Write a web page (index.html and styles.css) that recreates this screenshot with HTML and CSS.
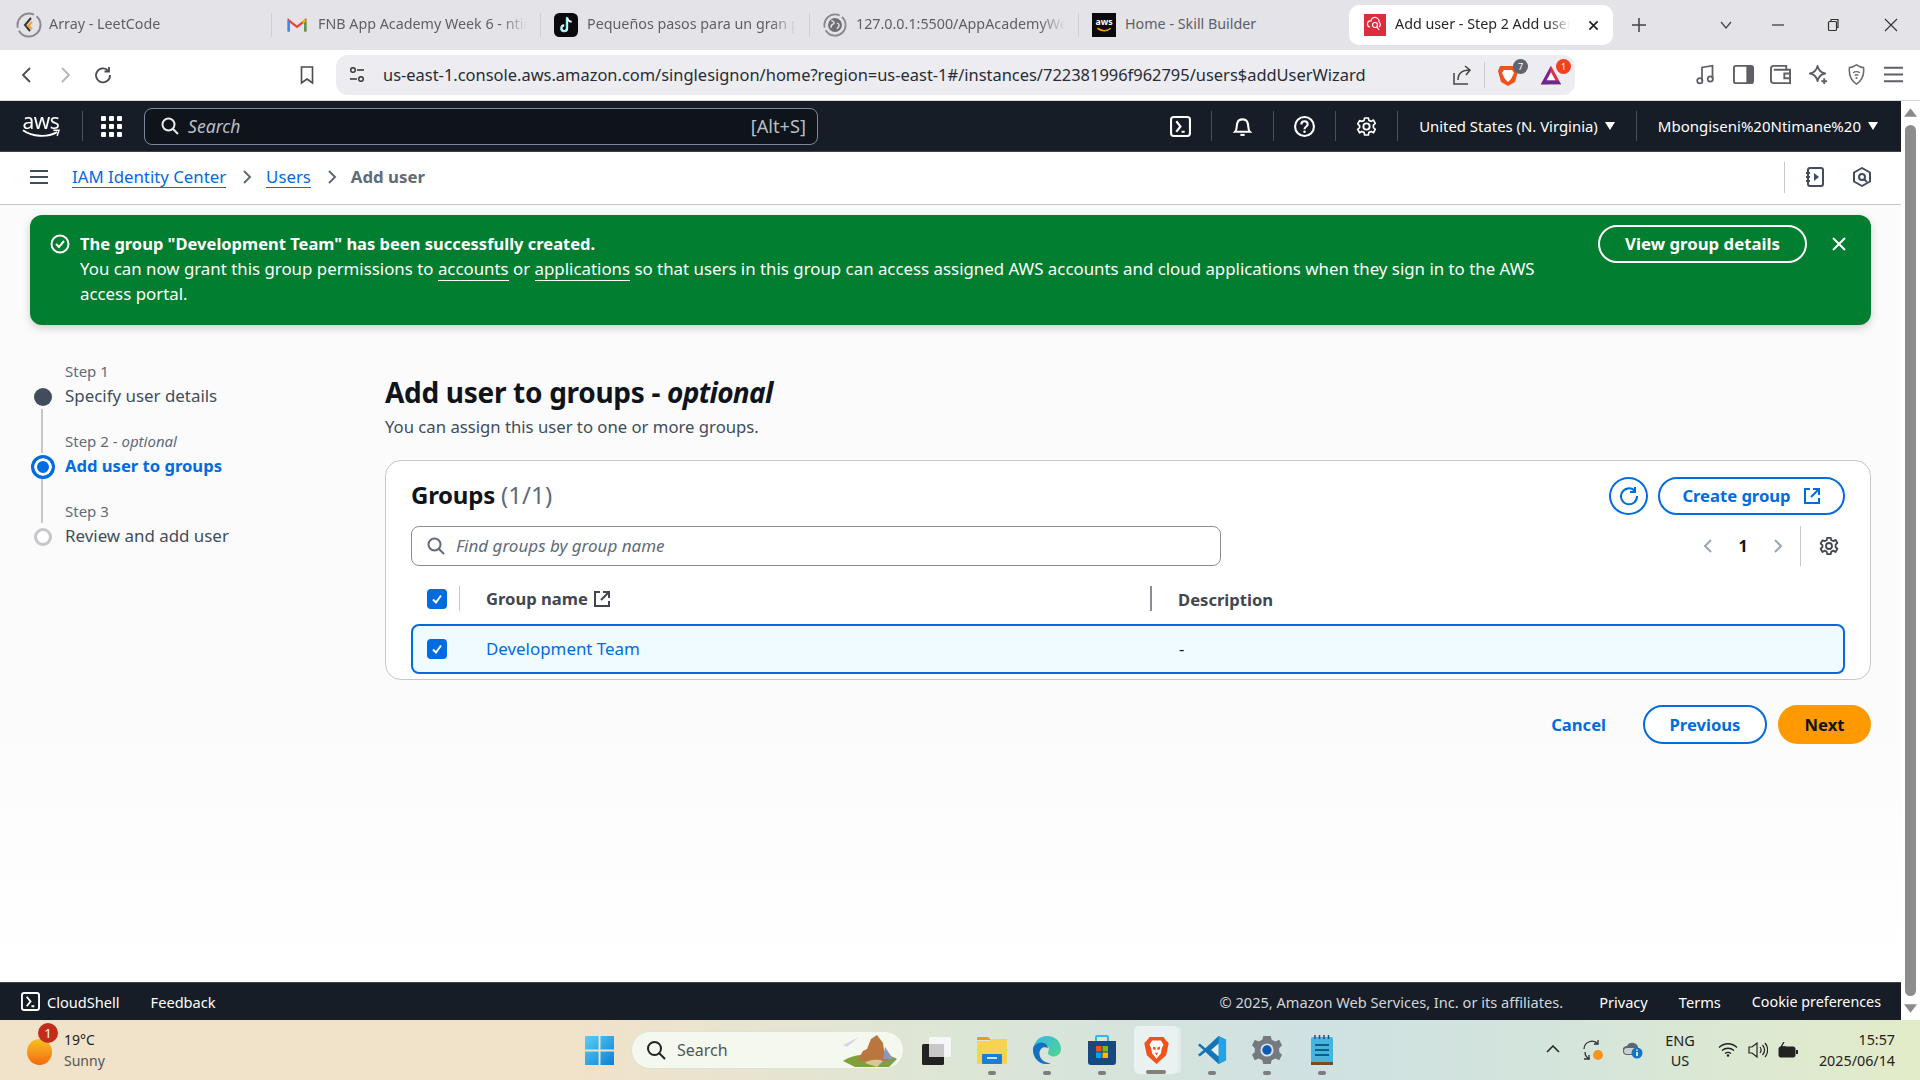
FILE: index.html
```html
<!DOCTYPE html>
<html lang="en">
<head>
<meta charset="utf-8">
<title>Add user - Step 2</title>
<link rel="stylesheet" href="styles.css">
</head>
<body>
<div class="tabstrip">
  <div class="tab">
    <svg class="fav big" viewBox="0 0 26 26"><circle cx="13" cy="13" r="11.500" fill="none" stroke="#8a8a90" stroke-width="2" stroke-dasharray="30 3 26 3"/><path d="M15 6 9 13l5 6" fill="none" stroke="#333" stroke-width="2"/><path d="M16 10l-4 4 4 3" fill="none" stroke="#f89f1b" stroke-width="2"/></svg>
    <span class="tabtext">Array - LeetCode</span>
  </div>
  <div class="tab">
    <svg class="fav" viewBox="-3 -5 26 26"><path d="M1 15V3l9 7 9-7v12" fill="none" stroke="#ea4335" stroke-width="2.400"/><path d="M1 15V3" stroke="#4285f4" stroke-width="2.400"/><path d="M19 15V3" stroke="#34a853" stroke-width="2.400"/><path d="M16 5l3-2" stroke="#fbbc04" stroke-width="2.400"/></svg>
    <span class="tabtext">FNB App Academy Week 6 - ntimanembongiseni</span>
  </div>
  <div class="tab">
    <svg class="fav" viewBox="0 0 22 22"><rect width="22" height="22" rx="5" fill="#0b0b0f"/><path d="M12 4v10a2.600 2.600 0 1 1-2.600-2.600M12 4c.4 2.400 1.900 3.800 4.200 4" fill="none" stroke="#fff" stroke-width="2"/><path d="M11.200 4.400v10a2.600 2.600 0 1 1-2.600-2.600" fill="none" stroke="#25f4ee" stroke-width=".7"/></svg>
    <span class="tabtext">Pequeños pasos para un gran progreso</span>
  </div>
  <div class="tab">
    <svg class="fav" viewBox="0 0 26 26"><circle cx="13" cy="13" r="11.500" fill="none" stroke="#8a8a90" stroke-width="2" stroke-dasharray="30 3 26 3"/><circle cx="13" cy="13" r="7.500" fill="#6f6f76"/><path d="M9 8c3 1 4 3 2 4s-3 2-2 4M15 11c2 0 3 2 2 4l-2 2" fill="none" stroke="#e3e3e8" stroke-width="1.500"/></svg>
    <span class="tabtext">127.0.0.1:5500/AppAcademyWeek6/index.html</span>
  </div>
  <div class="tab short">
    <svg class="fav" viewBox="0 0 22 22"><rect width="22" height="22" fill="#0a0a0a"/><text class="favaws" x="11" y="11" text-anchor="middle">aws</text><path d="M5 14c4 3 9 3 12 0" fill="none" stroke="#f90" stroke-width="1.500"/></svg>
    <span class="tabtext">Home - Skill Builder</span>
  </div>
  <div class="tab active">
    <svg class="fav" viewBox="-1 -1 24 24"><rect width="22" height="22" fill="#dd2c3c"/><path d="M6 13a3 3 0 0 1 1-6 4 4 0 0 1 8 1 3 3 0 0 1 0 5" fill="none" stroke="#fff" stroke-width="1.200"/><circle cx="11" cy="11" r="2.500" fill="none" stroke="#fff" stroke-width="1.200"/><path d="m13 13 2 3" stroke="#fff" stroke-width="1.200"/></svg>
    <span class="tabtext">Add user - Step 2 Add user to groups</span>
    <svg class="tabclose" viewBox="0 0 12 12"><path d="m1.500 1.500 9 9m0-9-9 9" stroke="#222" stroke-width="1.800"/></svg>
  </div>
  <svg class="newtab" viewBox="0 0 14 14"><path d="M7 0v14M0 7h14" stroke="#444" stroke-width="1.500"/></svg>
  <div class="wincontrols">
    <svg class="winbtn w1" viewBox="0 0 14 14"><path d="m2 4 5 6 5-6" fill="none" stroke="#444" stroke-width="1.200"/></svg>
    <svg class="winbtn w2" viewBox="0 0 14 14"><path d="M1 7h12" stroke="#333" stroke-width="1.200"/></svg>
    <svg class="winbtn w3" viewBox="0 0 14 14"><rect x="2.500" y="3.500" width="8" height="9" rx="1" fill="none" stroke="#333" stroke-width="1.200"/><path d="M5 3.500V1.500h7v8h-1.500" fill="none" stroke="#333" stroke-width="1.200"/></svg>
    <svg class="winbtn" viewBox="0 0 14 14"><path d="m1 1 12 12m0-12L1 13" stroke="#333" stroke-width="1.100"/></svg>
  </div>
</div>

<div class="toolbar">
  <div class="tbbtn"><svg viewBox="0 0 20 20"><path d="M13 3 6 10l7 7" fill="none" stroke="#4a4a50" stroke-width="1.800"/></svg></div>
  <div class="tbbtn"><svg viewBox="0 0 20 20"><path d="m7 3 7 7-7 7" fill="none" stroke="#b5b5ba" stroke-width="1.800"/></svg></div>
  <div class="tbbtn"><svg viewBox="0 0 20 20"><path d="M15.500 6A7 7 0 1 0 17 10M16 2v4.500h-4.500" fill="none" stroke="#4a4a50" stroke-width="1.800"/></svg></div>
  <div class="tbbtn bookmark"><svg viewBox="0 0 20 20"><path d="M4.500 2h11v16L10 14l-5.500 4z" fill="none" stroke="#4a4a50" stroke-width="1.600"/></svg></div>
  <div class="addressbar">
    <svg class="tune" viewBox="0 0 18 18"><circle cx="5" cy="4" r="2.300" fill="none" stroke="#333" stroke-width="1.400"/><path d="M9 4h7M2 13h7" stroke="#333" stroke-width="1.400"/><circle cx="13" cy="13" r="2.300" fill="none" stroke="#333" stroke-width="1.400"/></svg>
    <span class="url">us-east-1.console.aws.amazon.com/singlesignon/home?region=us-east-1#/instances/722381996f962795/users$addUserWizard</span>
    <svg class="share" viewBox="0 0 22 22"><path d="M2 9v11h14" fill="none" stroke="#444" stroke-width="1.500"/><path d="M6 16c0-6 4-10 12-10M13 2l5 4-4 5" fill="none" stroke="#444" stroke-width="1.500"/></svg>
    <span class="addrsep"></span>
    <div class="ext">
      <svg viewBox="0 0 22 24"><path d="M3 3h16l2 5-3 11-7 4-7-4L1 8z" fill="#f1511b"/><path d="M7 7h8l2 3-3 6-3 3-3-3-3-6z" fill="#fff"/></svg>
      <span class="extbadge grey">7</span>
    </div>
    <div class="ext bat">
      <svg viewBox="0 0 24 22"><path d="M12 1 23 21H1z" fill="#e0314b"/><path d="M12 1 1 21h8z" fill="#7a1fa2"/><path d="m12 8 5 9H7z" fill="#fff"/><path d="M1 21h22l-3-4H4z" fill="#662d91"/></svg>
      <span class="extbadge red">1</span>
    </div>
  </div>
  <div class="tbright">
    <div class="tbbtn2"><svg viewBox="0 0 22 24"><path d="M7 19V4l12-2v15" fill="none" stroke="#5f5f66" stroke-width="2"/><circle cx="4.500" cy="19" r="3" fill="none" stroke="#5f5f66" stroke-width="2"/><circle cx="16.500" cy="17" r="3" fill="none" stroke="#5f5f66" stroke-width="2"/></svg></div>
    <div class="tbbtn2"><svg viewBox="0 0 22 20"><rect x="1" y="1" width="20" height="18" rx="2" fill="none" stroke="#5f5f66" stroke-width="2"/><path d="M14 1h5a2 2 0 0 1 2 2v14a2 2 0 0 1-2 2h-5z" fill="#5f5f66"/></svg></div>
    <div class="tbbtn2"><svg viewBox="0 0 22 20"><path d="M17 5V1H4a3 3 0 0 0-3 3v12a3 3 0 0 0 3 3h17V5H4" fill="none" stroke="#5f5f66" stroke-width="2"/><path d="M21 9h-6v5h6" fill="none" stroke="#5f5f66" stroke-width="2"/></svg></div>
    <div class="tbbtn2"><svg viewBox="0 0 22 22"><path d="M10 2c1 5 3 7 8 8-5 1-7 3-8 8-1-5-3-7-8-8 5-1 7-3 8-8z" fill="none" stroke="#5f5f66" stroke-width="2" stroke-linejoin="round"/><path d="M17 15v6M14 18h6" stroke="#5f5f66" stroke-width="2"/></svg></div>
    <div class="tbbtn2"><svg viewBox="0 0 20 24"><path d="M10 1c3 2 5 3 8 3 1 8-2 15-8 19C4 19 1 12 2 4c3 0 5-1 8-3z" fill="none" stroke="#6a6a70" stroke-width="1.800"/><path d="M6 10c3-2 5-2 8 0M8 13c1.500-1 2.500-1 4 0" fill="none" stroke="#6a6a70" stroke-width="1.500"/><circle cx="10" cy="16" r="1.200" fill="#6a6a70"/></svg></div>
    <div class="tbbtn2"><svg viewBox="0 0 22 18"><path d="M1 2h20M1 9h20M1 16h20" stroke="#5f5f66" stroke-width="2"/></svg></div>
  </div>
</div>

<div class="middle">
  <div class="pagecol">
    <header class="awsnav">
      <div class="awslogo">
        <span class="awsword">aws</span>
        <svg viewBox="0 0 40 10"><path d="M1 1c10 7 25 8 36 2" fill="none" stroke="#fff" stroke-width="2"/><path d="m33 1 6 0-2 6" fill="none" stroke="#fff" stroke-width="1.500"/></svg>
      </div>
      <span class="navdiv logodiv"></span>
      <div class="gridicon"><i></i><i></i><i></i><i></i><i></i><i></i><i></i><i></i><i></i></div>
      <div class="globalsearch">
        <svg viewBox="0 0 18 18"><circle cx="7.500" cy="7.500" r="6" fill="none" stroke="#e9ebed" stroke-width="2"/><path d="m12 12 5 5" stroke="#e9ebed" stroke-width="2"/></svg>
        <span class="gsplaceholder">Search</span>
        <span class="gskey">[Alt+S]</span>
      </div>
      <div class="navright">
        <div class="navicon"><svg viewBox="0 0 20 20"><rect x="1" y="1" width="18" height="18" rx="2.500" fill="none" stroke="#fff" stroke-width="2"/><path d="m6 5 4 5-4 5M11 15h3" fill="none" stroke="#fff" stroke-width="2"/></svg></div>
        <span class="navdiv"></span>
        <div class="navicon"><svg viewBox="0 0 20 20"><path d="M3 15c2-2 1-5 2-8 1-5 9-5 10 0 1 3 0 6 2 8z" fill="none" stroke="#fff" stroke-width="2"/><path d="M8 18h4" stroke="#fff" stroke-width="2"/></svg></div>
        <span class="navdiv"></span>
        <div class="navicon"><svg viewBox="0 0 20 20"><circle cx="10" cy="10" r="9" fill="none" stroke="#fff" stroke-width="2"/><path d="M7 8c0-4 6-4 6 0 0 2-3 2-3 4.500" fill="none" stroke="#fff" stroke-width="2"/><circle cx="10" cy="15" r="1.200" fill="#fff"/></svg></div>
        <span class="navdiv"></span>
        <div class="navicon"><svg viewBox="0 0 20 20"><path d="M8 1h4l.6 2.600 2.400 1 2.300-1.400 2 3.500-2 1.800v2.800l2 1.800-2 3.500-2.300-1.400-2.400 1L12 19H8l-.6-2.800-2.400-1-2.300 1.400-2-3.500 2-1.800V9.100l-2-1.800 2-3.500L5 4.600l2.400-1z" fill="none" stroke="#fff" stroke-width="1.800" stroke-linejoin="round" transform="translate(1 1) scale(.9)"/><circle cx="10" cy="10" r="3" fill="none" stroke="#fff" stroke-width="1.800"/></svg></div>
        <span class="navdiv"></span>
        <div class="navmenu region"><span>United States (N. Virginia)</span><i class="caret"></i></div>
        <span class="navdiv"></span>
        <div class="navmenu user"><span>Mbongiseni%20Ntimane%20</span><i class="caret"></i></div>
      </div>
    </header>

    <div class="crumbbar">
      <svg class="hamb" viewBox="0 0 18 16"><path d="M0 2h18M0 8h18M0 14h18" stroke="#414d5c" stroke-width="2"/></svg>
      <a class="crumb first">IAM Identity Center</a>
      <svg class="crumbsep" viewBox="0 0 10 16"><path d="m2 2 6 6-6 6" fill="none" stroke="#5f6b7a" stroke-width="2"/></svg>
      <a class="crumb">Users</a>
      <svg class="crumbsep" viewBox="0 0 10 16"><path d="m2 2 6 6-6 6" fill="none" stroke="#5f6b7a" stroke-width="2"/></svg>
      <span class="crumbcur">Add user</span>
      <div class="crumbtools">
        <span class="crumbdiv"></span>
        <svg class="tool" viewBox="0 0 20 20"><rect x="3" y="1" width="15" height="18" rx="2" fill="none" stroke="#414d5c" stroke-width="2"/><path d="M1 6h4M1 10h4M1 14h4" stroke="#414d5c" stroke-width="2"/><path d="m9 6 5 4-5 4z" fill="#414d5c"/></svg>
        <svg class="tool" viewBox="0 0 20 20"><path d="M10 1l8 4.500v9L10 19l-8-4.500v-9z" fill="none" stroke="#414d5c" stroke-width="2" stroke-linejoin="round"/><circle cx="10" cy="10" r="3" fill="none" stroke="#414d5c" stroke-width="2"/><path d="m12 12 3 3" stroke="#414d5c" stroke-width="2"/></svg>
      </div>
    </div>

    <main class="content">
      <section class="flash">
        <svg class="flashicon" viewBox="0 0 20 20"><circle cx="10" cy="10" r="8.500" fill="none" stroke="#fff" stroke-width="2"/><path d="m6 10 3 3 5-6" fill="none" stroke="#fff" stroke-width="2"/></svg>
        <div class="flashtext">
          <strong>The group "Development Team" has been successfully created.</strong><br>
          You can now grant this group permissions to <a>accounts</a> or <a>applications</a> so that users in this group can access assigned AWS accounts and cloud applications when they sign in to the AWS access portal.
        </div>
        <button class="flashbtn">View group details</button>
        <svg class="flashclose" viewBox="0 0 16 16"><path d="m2 2 12 12m0-12L2 14" stroke="#fff" stroke-width="2"/></svg>
      </section>

      <div class="wizard">
        <nav class="steps">
          <div class="step">
            <span class="stepspace"></span><span class="steplabel">Step 1</span>
            <span class="dot done"></span><span class="steptitle">Specify user details</span>
            <span class="rail"></span>
          </div>
          <div class="step">
            <span class="rail"></span><span class="steplabel">Step 2 - <em>optional</em></span>
            <span class="dot current"></span><span class="steptitle currenttitle">Add user to groups</span>
            <span class="rail"></span>
          </div>
          <div class="step">
            <span class="rail"></span><span class="steplabel">Step 3</span>
            <span class="dot todo"></span><span class="steptitle">Review and add user</span>
          </div>
        </nav>

        <div class="wizmain">
          <h1>Add user to groups - <em>optional</em></h1>
          <p class="lead">You can assign this user to one or more groups.</p>

          <section class="card">
            <div class="cardhead">
              <h2>Groups <span>(1/1)</span></h2>
              <button class="roundbtn"><svg viewBox="0 0 20 20"><path d="M15.500 4.500A8 8 0 1 0 18 10" fill="none" stroke="#006ce0" stroke-width="2"/><path d="M16 1v5h-5" fill="none" stroke="#006ce0" stroke-width="2"/></svg></button>
              <button class="outline createbtn">Create group <svg viewBox="0 0 18 18"><path d="M7 2H2v14h14v-5" fill="none" stroke="#006ce0" stroke-width="2"/><path d="M10 2h6v6M16 2 8 10" fill="none" stroke="#006ce0" stroke-width="2"/></svg></button>
            </div>
            <div class="filterrow">
              <div class="filter">
                <svg viewBox="0 0 18 18"><circle cx="7.500" cy="7.500" r="6" fill="none" stroke="#5f6b7a" stroke-width="2"/><path d="m12 12 5 5" stroke="#5f6b7a" stroke-width="2"/></svg>
                <span>Find groups by group name</span>
              </div>
              <div class="pager">
                <svg class="pgchev" viewBox="0 0 10 16"><path d="M8 2 2 8l6 6" fill="none" stroke="#9ba7b6" stroke-width="2"/></svg>
                <b>1</b>
                <svg class="pgchev" viewBox="0 0 10 16"><path d="m2 2 6 6-6 6" fill="none" stroke="#9ba7b6" stroke-width="2"/></svg>
                <span class="pgdiv"></span>
                <svg class="pggear" viewBox="0 0 20 20"><path d="M8 1h4l.6 2.600 2.400 1 2.300-1.400 2 3.500-2 1.800v2.800l2 1.800-2 3.500-2.300-1.400-2.400 1L12 19H8l-.6-2.800-2.400-1-2.300 1.400-2-3.500 2-1.800V9.100l-2-1.800 2-3.500L5 4.600l2.400-1z" fill="none" stroke="#424650" stroke-width="2" stroke-linejoin="round" transform="translate(1 1) scale(.9)"/><circle cx="10" cy="10" r="3" fill="none" stroke="#424650" stroke-width="1.800"/></svg>
              </div>
            </div>
            <div class="thead">
              <div class="cellcheck withdiv"><span class="check"><svg viewBox="0 0 14 14"><path d="m3 7.500 3 3 5-7" fill="none" stroke="#fff" stroke-width="2"/></svg></span></div>
              <div class="cellname">Group name <svg viewBox="0 0 18 18"><path d="M7 2H2v14h14v-5" fill="none" stroke="#424650" stroke-width="2"/><path d="M10 2h6v6M16 2 8 10" fill="none" stroke="#424650" stroke-width="2"/></svg></div>
              <div class="celldesc">Description</div>
            </div>
            <div class="trow">
              <div class="cellcheck"><span class="check"><svg viewBox="0 0 14 14"><path d="m3 7.500 3 3 5-7" fill="none" stroke="#fff" stroke-width="2"/></svg></span></div>
              <a class="rowlink">Development Team</a>
              <div class="rowdesc">-</div>
            </div>
          </section>

          <div class="actions">
            <a class="cancel">Cancel</a>
            <button class="outline prev">Previous</button>
            <button class="next">Next</button>
          </div>
        </div>
      </div>
    </main>

    <footer class="consolefoot">
      <svg class="csicon" viewBox="0 0 20 20"><rect x="1" y="1" width="18" height="18" rx="2.500" fill="none" stroke="#fff" stroke-width="2"/><path d="m6 5 4 5-4 5M11 15h3" fill="none" stroke="#fff" stroke-width="2"/></svg>
      <span class="csname">CloudShell</span>
      <span class="feedback">Feedback</span>
      <span class="copy">© 2025, Amazon Web Services, Inc. or its affiliates.</span>
      <span class="flink">Privacy</span>
      <span class="flink">Terms</span>
      <span class="flink">Cookie preferences</span>
    </footer>
  </div>
  <div class="scrollbar">
    <svg viewBox="0 0 12 8"><path d="M6 0 12 8H0z" fill="#8a8a8a"/></svg>
    <span class="thumb"></span>
    <svg viewBox="0 0 12 8"><path d="M0 0h12L6 8z" fill="#8a8a8a"/></svg>
  </div>
</div>

<div class="taskbar">
  <div class="weather">
    <span class="sun"></span>
    <span class="wbadge">1</span>
    <div class="wtext"><span>19°C</span><span class="wsub">Sunny</span></div>
  </div>
  <svg class="winlogo" viewBox="0 0 30 30"><defs><linearGradient id="w" x1="0" y1="0" x2="1" y2="1"><stop offset="0" stop-color="#5ad0f5"/><stop offset="1" stop-color="#0a7fd6"/></linearGradient></defs><path d="M0 0h14v14H0zM16 0h14v14H16zM0 16h14v14H0zM16 16h14v14H16z" fill="url(#w)"/></svg>
  <div class="tasksearch">
    <svg class="tsglass" viewBox="0 0 20 20"><circle cx="8.500" cy="8.500" r="6.500" fill="none" stroke="#222" stroke-width="2"/><path d="m13 13 6 6" stroke="#222" stroke-width="2"/></svg>
    <span class="tstext">Search</span>
    <svg class="tsart" viewBox="0 0 60 34"><path d="M4 12 20 4 8 14z" fill="#d8d4ec"/><path d="M4 28c10-8 42-10 54-2l-8 8H16z" fill="#7ea13c"/><path d="M18 28 24 18l4-2 4-10 6-4 6 8 2 14 4 4z" fill="#b9763e"/><path d="M26 30c4-4 14-4 18-2l-6 6z" fill="#d9c79a"/><path d="M46 14l8 12h-10z" fill="#8a97b8"/></svg>
  </div>
  <div class="taskicons">
    <div class="ti">
      <svg viewBox="0 0 30 30"><rect y="9" width="22" height="21" rx="1.500" fill="#222"/><rect x="7" y="2" width="22" height="20" rx="1.500" fill="#f6f6f6"/><rect x="7" y="9" width="15" height="13" fill="#c8c8c8"/></svg>
    </div>
    <div class="ti run">
      <svg viewBox="0 0 30 28"><path d="M0 2a1 1 0 0 1 1-1h10l3 3H0z" fill="#d9a21f"/><path d="M0 5h12l3-2h15v25H0z" fill="#f8d253"/><rect x="5" y="18" width="20" height="10" rx="1" fill="#1a7ed4"/><rect x="10" y="21" width="10" height="2" fill="#bfe2ff"/></svg>
    </div>
    <div class="ti run">
      <svg viewBox="0 0 32 32"><defs><linearGradient id="e1" x1="0" y1="0" x2="1" y2="1"><stop offset="0" stop-color="#35b6e8"/><stop offset="1" stop-color="#52d68a"/></linearGradient></defs><path d="M16 1c9 0 15 6 15 14 0 5-4 8-8 8-3 0-6-2-6-4 0-1 1-2 1-4 0-3-3-6-7-6-5 0-9 4-10 7C2 7 8 1 16 1z" fill="url(#e1)"/><path d="M1 16c0-5 5-8 9-8 4 0 7 3 7 6-3-2-9-1-9 6 0 5 5 10 12 10-2 1-3 1-5 1C7 31 1 24 1 16z" fill="#1470c4"/></svg>
    </div>
    <div class="ti run">
      <svg viewBox="0 0 30 30"><path d="M9 6V2a1 1 0 0 1 1-1h10a1 1 0 0 1 1 1v4" fill="none" stroke="#35b5e8" stroke-width="2"/><path d="M1 6h28v21a3 3 0 0 1-3 3H4a3 3 0 0 1-3-3z" fill="#15497f"/><rect x="9" y="11" width="5.500" height="5.500" fill="#f25022"/><rect x="15.500" y="11" width="5.500" height="5.500" fill="#7fba00"/><rect x="9" y="17.500" width="5.500" height="5.500" fill="#00a4ef"/><rect x="15.500" y="17.500" width="5.500" height="5.500" fill="#ffb900"/></svg>
    </div>
    <div class="ti brave">
      <svg class="braveicon" viewBox="0 0 28 32"><path d="M6 1h16l3 4 3 3-3 14-11 10L3 22 0 8l3-3z" fill="#f1511b"/><path d="M9 5h10l3 5-2 4-1 6-5 6-5-6-1-6-2-4z" fill="#fff"/><path d="M10 12l3 1v3l-3-1zM18 12l-3 1v3l3-1zM12 19h4l-2 3z" fill="#f1511b"/></svg>
      <span class="brunning"></span>
    </div>
    <div class="ti run">
      <svg viewBox="0 0 32 32"><path d="M23 1 31 5v22l-8 4L9 18l-6 5-2-2 6-5-6-5 2-2 6 5z" fill="#1673b8"/><path d="M23 1 31 5v22l-8 4z" fill="#22a3e6"/><path d="M23 9v14l-8-7z" fill="#e6eff0"/></svg>
    </div>
    <div class="ti run">
      <svg viewBox="0 0 32 32"><path d="M12 1h8l1 4 4 2 4-2 3 6-3 3v4l3 3-3 6-4-2-4 2-1 4h-8l-1-4-4-2-4 2-3-6 3-3v-4L0 11l3-6 4 2 4-2z" fill="#757980"/><circle cx="16" cy="16" r="7" fill="#d8dfe8"/><circle cx="16" cy="16" r="5" fill="#0f5ab0"/></svg>
    </div>
    <div class="ti run">
      <svg class="notes" viewBox="0 0 22 30"><rect x="0" y="2" width="22" height="28" rx="2" fill="#45b4de"/><rect x="0" y="27" width="22" height="3" fill="#7a4a22"/><path d="M4 0v4M8.500 0v4M13 0v4M17.500 0v4" stroke="#14587e" stroke-width="1.500"/><path d="M4 10h14M4 15h14M4 20h14" stroke="#0e5f86" stroke-width="2"/></svg>
    </div>
  </div>
  <div class="tray">
    <svg class="tr chevup" viewBox="0 0 14 8"><path d="m1 7 6-6 6 6" fill="none" stroke="#222" stroke-width="1.500"/></svg>
    <svg class="tr sync" viewBox="0 0 20 20"><path d="M1 9a8 8 0 0 1 14-5" fill="none" stroke="#333" stroke-width="1.300"/><path d="M15 0v4h-4M2 12c0 3 2 6 5 7M1 19h5v-4" fill="none" stroke="#333" stroke-width="1.300"/><circle cx="15" cy="15" r="5" fill="#f7941d"/></svg>
    <svg class="tr cloudi" viewBox="0 0 20 18"><path d="M4 14a4.500 4.500 0 0 1 0-9 6 6 0 0 1 11 1v8z" fill="#5f6670"/><path d="M4 13a3 3 0 0 1 0-6h8v6z" fill="#c9cfd3"/><circle cx="14" cy="12" r="5.500" fill="#1473c4"/><path d="M14 11v4M14 8.500v1.200" stroke="#fff" stroke-width="1.600"/></svg>
    <div class="lang"><span>ENG</span><span>US</span></div>
    <svg class="tr wifi" viewBox="0 0 20 14"><path d="M1 4.500c5-5 13-5 18 0M4 7.500c3.500-3 8.500-3 12 0M7 10.500c2-1.500 4-1.500 6 0" fill="none" stroke="#222" stroke-width="1.300"/><circle cx="10" cy="12.500" r="1.300" fill="#222"/></svg>
    <svg class="tr vol" viewBox="0 0 20 16"><path d="M1 5h3l5-4v14l-5-4H1z" fill="none" stroke="#222" stroke-width="1.200"/><path d="M12 5c1.500 2 1.500 4 0 6M14.500 3c2.500 3 2.500 7 0 10M17 1c3.500 4 3.500 10 0 14" fill="none" stroke="#222" stroke-width="1.200"/></svg>
    <svg class="tr batt" viewBox="0 0 20 16"><rect x="1" y="5" width="16" height="10" rx="1.500" fill="#222" stroke="#222"/><rect x="18" y="8" width="2" height="4" fill="#222"/><path d="M6 0 3 5h4l-2 5" fill="none" stroke="#222" stroke-width="1.300"/></svg>
    <div class="clock"><span>15:57</span><span>2025/06/14</span></div>
  </div>
</div>
</body>
</html>
```

FILE: styles.css
```css
* { box-sizing: border-box; }
html, body { margin: 0; height: 100%; }
body {
  width: 1920px; height: 1080px; overflow: hidden;
  display: flex; flex-direction: column;
  font-family: "Noto Sans", "Open Sans", sans-serif;
  font-size: 16.6px; color: #0f141a; background: #fff;
}
svg { display: block; flex: none; }
button { font-family: inherit; }

/* browser tabs */
.tabstrip { height: 50px; flex: none; background: #e3e3e8; display: flex; align-items: center; padding-left: 3px; }
.tab { width: 269px; height: 40px; display: flex; align-items: center; gap: 9px; padding: 0 14px 0 13px; position: relative; }
.tab + .tab::before { content: ""; position: absolute; left: -1px; top: 8px; height: 24px; border-left: 1px solid #cfcfd4; }
.tab .fav { width: 24px; height: 24px; }
.tab .fav.big { width: 26px; height: 26px; margin-right: -2px; }
.tabtext { font-size: 14.3px; line-height: 20px; margin-top: -2px; color: #5f5f66; white-space: nowrap; overflow: hidden; flex: 1; -webkit-mask-image: linear-gradient(90deg, #000 88%, transparent); mask-image: linear-gradient(90deg, #000 88%, transparent); }
.favaws { font: 700 8px "Noto Sans", sans-serif; fill: #fff; }
.tab.short .tabtext { -webkit-mask-image: none; mask-image: none; }
.tab.active { width: 264px; margin-left: 1px; background: #fff; border-radius: 10px; padding: 0 14px; gap: 8px; }
.tab.active::before { display: none; }
.tab.active .tabtext { color: #26262c; }
.tabclose { width: 11px; height: 11px; margin-left: 10px; }
.newtab { width: 14px; height: 14px; margin-left: 19px; }
.wincontrols { display: flex; margin-left: 73px; }
.winbtn { width: 14px; height: 14px; }
.w1 { margin-right: 38px; }
.w2 { margin-right: 41px; }
.w3 { margin-right: 44px; }

/* browser toolbar */
.toolbar { height: 51px; flex: none; background: #fff; display: flex; align-items: center; padding: 0 0 1px 8px; border-bottom: 1px solid #d8d8dc; }
.tbbtn { width: 38px; display: flex; justify-content: center; }
.tbbtn svg { width: 20px; height: 20px; }
.tbbtn.bookmark { margin-left: 166px; margin-right: 10px; }
.addressbar { width: 1239px; height: 40px; background: #ececf1; border-radius: 12px; display: flex; align-items: center; padding-left: 12px; }
.tune { width: 18px; height: 18px; }
.url { margin-left: 17px; width: 1069px; font-size: 16.45px; color: #272c36; white-space: nowrap; }
.share { width: 22px; height: 22px; }
.addrsep { height: 26px; border-left: 1px solid #c9c9cf; margin-left: 10px; }
.ext { position: relative; width: 22px; height: 24px; margin-left: 12px; }
.ext svg { width: 100%; height: 100%; }
.ext.bat { margin-left: 21px; }
.extbadge { position: absolute; top: -4px; right: -9px; width: 15px; height: 15px; border-radius: 50%; color: #fff; font-size: 9px; line-height: 15px; text-align: center; }
.extbadge.grey { background: #5e6470; }
.extbadge.red { background: #f0421e; }
.tbright { display: flex; margin-left: 112px; }
.tbbtn2 { width: 37.600px; display: flex; justify-content: center; }
.tbbtn2 svg { width: 21px; height: 21px; }

/* middle */
.middle { flex: 1; min-height: 0; display: flex; }
.pagecol { flex: 1; min-width: 0; display: flex; flex-direction: column; }
.scrollbar { width: 19px; flex: none; background: #fff; display: flex; flex-direction: column; align-items: center; padding: 7px 0; }
.scrollbar svg { width: 13px; height: 9px; }
.thumb { flex: 1; width: 11px; margin: 8px 0; background: #8c8c8c; border-radius: 6px; }

/* aws nav */
.awsnav { height: 51px; flex: none; background: #161d26; border-bottom: 1px solid #3b424c; display: flex; align-items: center; padding-left: 22px; color: #fff; }
.awslogo { width: 38px; display: flex; flex-direction: column; align-items: center; }
.awsword { font-size: 21px; line-height: 16px; color: #fff; letter-spacing: -.5px; transform: scaleY(1.050); }
.awslogo svg { width: 38px; height: 10px; }
.navdiv { height: 30px; border-left: 1px solid #48505b; flex: none; }
.logodiv { margin-left: 22px; }
.gridicon { margin-left: 18px; width: 21px; height: 21px; display: grid; grid-template-columns: repeat(3, 5px); grid-auto-rows: 5px; gap: 3px; }
.gridicon i { background: #fff; border-radius: 1px; }
.globalsearch { margin-left: 22px; width: 674px; height: 37px; background: #0f141a; border: 1.500px solid #7d8998; border-radius: 8px; display: flex; align-items: center; padding: 0 11px 0 16px; }
.globalsearch svg { width: 18px; height: 18px; }
.gsplaceholder { margin-left: 9px; font-style: italic; font-size: 17.6px; color: #b8bfc8; }
.gskey { margin-left: auto; color: #b8bfc8; font-size: 18.2px; }
.navright { margin-left: auto; display: flex; align-items: center; }
.navicon { width: 61px; display: flex; justify-content: center; }
.navicon svg { width: 21px; height: 21px; }
.navmenu { display: flex; align-items: center; gap: 7px; font-size: 14.9px; padding: 0 21px; white-space: nowrap; }
.navmenu.user { padding-right: 23px; font-size: 15px; }
.caret { width: 0; height: 0; border: 5px solid transparent; border-top: 8px solid #fff; border-bottom: 0; }

/* breadcrumbs */
.crumbbar { height: 53px; flex: none; background: #fff; border-bottom: 1px solid #c6c6cd; display: flex; align-items: center; padding: 0 0 2px 30px; font-size: 16.8px; }
.hamb { width: 18px; height: 16px; }
.crumb { color: #006ce0; border-bottom: 1.500px solid #006ce0; line-height: 21px; }
.crumb.first { margin-left: 24px; }
.crumbsep { width: 10px; height: 16px; margin: 0 14px 0 16px; }
.crumbcur { font-weight: 700; color: #5f6b7a; margin-top: -2px; }
.crumbtools { margin-left: auto; display: flex; align-items: center; padding-right: 29px; }
.crumbdiv { height: 31px; border-left: 1px solid #c6c6cd; margin-right: 20px; }
.tool { width: 20px; height: 20px; }
.tool + .tool { margin-left: 27px; }

/* content */
.content { flex: 1; min-height: 0; background: linear-gradient(#fbfbfb 65%, #fff); padding: 10px 30px 0; }
.flash { height: 110px; background: #027e30; border-radius: 12px; box-shadow: 0 3px 8px rgba(0,0,0,.18); color: #fff; display: flex; align-items: flex-start; padding: 10px 14px 0 20px; }
.flashicon { width: 20px; height: 20px; margin-top: 9px; }
.flashtext { width: 1460px; margin: 6px 58px 0 10px; line-height: 25px; font-size: 16.85px; }
.flashtext strong { font-size: 16.5px; }
.flashtext a { border-bottom: 1px solid #fff; }
.flashbtn { width: 209px; height: 38px; flex: none; padding: 0 0 2px; background: transparent; border: 2px solid #fff; border-radius: 20px; color: #fff; font-size: 16.8px; font-weight: 700; }
.flashclose { width: 16px; height: 16px; margin: 11px 0 0 24px; }

.wizard { display: grid; grid-template-columns: 355px 1fr; padding-top: 36px; }
.step { display: grid; grid-template-columns: 24px 1fr; column-gap: 11px; grid-template-rows: 22px 26px 22px; justify-items: start; align-items: center; }
.steplabel { font-size: 15px; color: #5f6b7a; grid-column: 2; margin-bottom: 2px; }
.steptitle { color: #414d5c; font-size: 16.9px; margin-bottom: 2px; }
.steptitle.currenttitle { color: #006ce0; font-weight: 700; font-size: 16.6px; }
.rail { width: 2px; height: 100%; background: #c6c6cd; justify-self: center; grid-column: 1; }
.stepspace { grid-column: 1; }
.dot { justify-self: center; width: 18px; height: 18px; border-radius: 50%; margin: 2px 0 0 1px; }
.dot.done { background: #414d5c; }
.dot.current { width: 24px; height: 24px; margin-top: 1px; border: 3px solid #006ce0; background: #006ce0; box-shadow: inset 0 0 0 3px #fff; }
.dot.todo { border: 3px solid #c6c6cd; background: #fff; }

.wizmain { padding-top: 13px; }
h1 { margin: 0; font-size: 28px; line-height: 36px; font-weight: 700; letter-spacing: -.3px; color: #0f141a; }
h1 em { letter-spacing: -.7px; }
.lead { margin: 5px 0 0; line-height: 24px; color: #414d5c; font-size: 16.7px; }
.card { margin-top: 21px; height: 220px; background: #fff; border: 1px solid #c6c6cd; border-radius: 16px; padding: 16px 25px 0; }
.cardhead { display: flex; align-items: center; gap: 10px; height: 38px; }
h2 { margin: 0 auto 0 0; font-size: 24px; line-height: 36px; padding-bottom: 2px; font-weight: 700; letter-spacing: -.25px; }
h2 span { font-weight: 400; color: #5f6b7a; letter-spacing: .1px; }
.roundbtn { width: 39px; height: 38px; border: 2px solid #006ce0; border-radius: 50%; background: #fff; padding: 0; display: flex; align-items: center; justify-content: center; }
.roundbtn svg { width: 20px; height: 20px; }
.outline { background: #fff; border: 2px solid #006ce0; border-radius: 20px; color: #006ce0; font-size: 16.6px; font-weight: 700; padding: 0; }
.createbtn { width: 187px; height: 38px; padding-bottom: 2px; display: flex; align-items: center; justify-content: center; gap: 12px; }
.createbtn svg { width: 18px; height: 18px; margin-top: 2px; }
.filterrow { display: flex; align-items: center; margin-top: 11px; }
.filter { width: 810px; height: 40px; border: 1px solid #8c8c94; border-radius: 8px; display: flex; align-items: center; padding-left: 15px; gap: 11px; font-style: italic; font-size: 17px; color: #5f6b7a; background: #fff; }
.filter svg { width: 18px; height: 18px; }
.filter span { margin-top: -2px; }
.pager { margin-left: auto; display: flex; align-items: center; padding-right: 6px; }
.pgchev { width: 10px; height: 16px; }
.pager b { width: 60px; text-align: center; font-size: 16px; }
.pgdiv { height: 40px; border-left: 1px solid #c6c6cd; margin: 0 18px 0 17px; }
.pggear { width: 20px; height: 20px; }
.thead { display: grid; grid-template-columns: 49px 692px 1fr; height: 38px; margin-top: 20px; align-items: start; }
.cellcheck { display: flex; align-items: center; height: 25px; padding-left: 16px; }
.cellcheck.withdiv { border-right: 1px solid #c6c6cd; }
.check { width: 20px; height: 20px; border-radius: 4px; background: #006ce0; display: flex; align-items: center; justify-content: center; }
.check svg { width: 14px; height: 14px; }
.cellname { font-weight: 700; color: #424650; height: 25px; line-height: 22px; padding-left: 26px; border-right: 2px solid #8c8c94; display: flex; align-items: center; gap: 5px; }
.cellname svg { width: 18px; height: 18px; }
.celldesc { font-weight: 700; color: #424650; padding-left: 26px; line-height: 28px; }
.trow { display: grid; grid-template-columns: 49px 692px 1fr; height: 50px; align-items: center; background: #f0fbff; border: 2px solid #006ce0; border-radius: 8px; margin: 0; }
.trow .cellcheck { padding-left: 14px; }
.rowlink { color: #006ce0; padding-left: 24px; font-size: 16.9px; margin-top: -2px; }
.rowdesc { padding-left: 25px; color: #0f141a; margin-top: -2px; }
.actions { display: flex; align-items: center; justify-content: flex-end; margin-top: 25px; }
.cancel { color: #006ce0; font-weight: 700; margin-right: 37px; }
.prev { width: 124px; height: 39px; }
.next { width: 93px; height: 39px; margin-left: 11px; background: #ff9900; border: 0; border-radius: 20px; color: #0f141a; font-size: 16.6px; font-weight: 700; padding: 0; }

/* console footer */
.consolefoot { height: 38px; flex: none; background: #161d26; color: #fff; font-size: 14.6px; display: flex; align-items: center; padding-left: 21px; border-top: 1px solid #3b424c; }
.csicon { width: 19px; height: 19px; }
.csname { margin-left: 7px; }
.feedback { margin-left: 31px; }
.copy { margin-left: auto; margin-right: 5px; color: #d1d5db; }
.flink { margin-left: 31px; }
.flink:last-child { margin-right: 20px; font-size: 14.3px; }

/* windows taskbar */
.taskbar { height: 60px; flex: none; display: flex; align-items: center; background: linear-gradient(90deg, #f1e3ca 0%, #f1e2ca 30%, #dce6d6 50%, #cfe1e2 68%, #d3e4dc 80%, #e3ecc9 100%); color: #222; font-size: 14px; }
.weather { position: relative; width: 120px; padding-left: 27px; display: flex; align-items: center; }
.sun { width: 25px; height: 26px; border-radius: 50%; background: linear-gradient(#f8c021, #f26a12); margin-top: 4px; }
.wbadge { position: absolute; left: 38px; top: -6px; width: 20px; height: 20px; border-radius: 50%; background: #c42b1c; color: #fff; font-size: 13px; line-height: 20px; text-align: center; }
.wtext { display: flex; flex-direction: column; margin-left: 12px; line-height: 21px; }
.wsub { color: #555; }
.winlogo { width: 29px; height: 29px; margin-left: 465px; }
.tasksearch { width: 273px; height: 38px; margin-left: 17px; border-radius: 19px; background: #f5f8ef; border: 1px solid #dfe3d6; display: flex; align-items: center; padding-left: 14px; }
.tsglass { width: 20px; height: 20px; }
.tstext { margin-left: 11px; font-size: 16px; color: #555; }
.tsart { width: 60px; height: 36px; margin-left: auto; margin-right: 4px; }
.taskicons { display: flex; margin-left: 5px; height: 48px; align-items: center; }
.ti { width: 55px; height: 48px; display: flex; align-items: center; justify-content: center; position: relative; }
.ti svg { width: 30px; height: 30px; }
.ti svg.notes { width: 22px; }
.ti svg.braveicon { width: 25px; height: 28px; }
.ti.run::after { content: ""; position: absolute; bottom: -1px; left: 50%; margin-left: -4px; width: 8px; height: 4px; border-radius: 2px; background: #7d7d7d; }
.ti.brave { background: #e9f1f1; border-radius: 5px; box-shadow: 4px 0 0 -1px #e4ecea; width: 44px; margin: 0 6px 0 5px; }
.brunning { position: absolute; bottom: 0; left: 50%; margin-left: -10px; width: 20px; height: 4px; border-radius: 2px; background: #85817a; }
.tray { margin-left: auto; display: flex; align-items: center; padding-right: 25px; }
.tr { flex: none; }
.chevup { width: 14px; height: 8px; margin-bottom: 3px; }
.sync { width: 20px; height: 20px; margin-left: 23px; }
.cloudi { width: 20px; height: 18px; margin-left: 20px; }
.lang { display: flex; flex-direction: column; align-items: center; font-size: 14.5px; line-height: 20px; margin-left: 22px; width: 30px; }
.wifi { width: 20px; height: 14px; margin-left: 23px; }
.vol { width: 20px; height: 16px; margin-left: 10px; }
.batt { width: 20px; height: 16px; margin-left: 10px; }
.clock { display: flex; flex-direction: column; align-items: flex-end; line-height: 21px; margin-left: 10px; width: 87px; font-size: 14.3px; }
```
